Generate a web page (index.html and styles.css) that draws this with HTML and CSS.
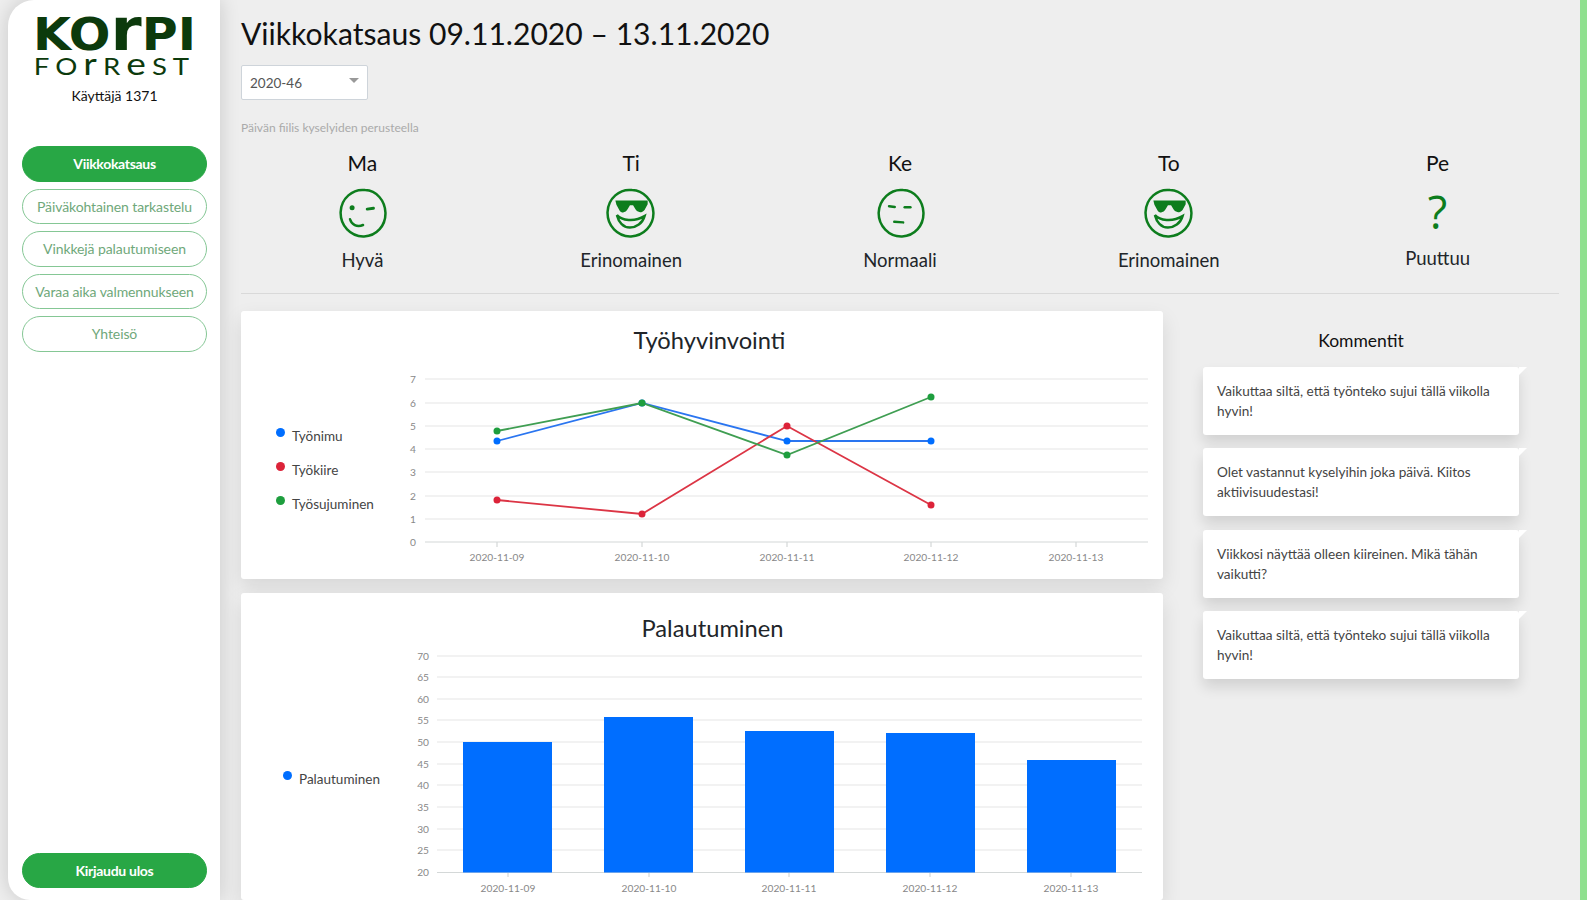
FILE: index.html
```html
<!DOCTYPE html>
<html lang="fi">

<head>
    <meta charset="UTF-8">
    <title>Viikkokatsaus</title>
    <link rel="stylesheet" href="styles.css">
</head>

<body>
    <div class="page">
        <aside class="sidebar">
            <div class="logo">
                <div class="logo-top">KO<span class="logo-r">r</span>PI</div>
                <div class="logo-bottom">FO<span class="logo-low">r</span>R<span class="logo-low">e</span>ST</div>
            </div>
            <div class="user">Käyttäjä 1371</div>
            <nav class="nav">
                <a class="pill active" href="#">Viikkokatsaus</a>
                <a class="pill" href="#">Päiväkohtainen tarkastelu</a>
                <a class="pill" href="#">Vinkkejä palautumiseen</a>
                <a class="pill" href="#">Varaa aika valmennukseen</a>
                <a class="pill" href="#">Yhteisö</a>
            </nav>
            <a class="pill active logout" href="#">Kirjaudu ulos</a>
        </aside>

        <main class="main">
            <h1>Viikkokatsaus 09.11.2020 – 13.11.2020</h1>
            <div class="week-select">2020-46<span class="caret"></span></div>
            <p class="caption">Päivän fiilis kyselyiden perusteella</p>

            <div class="days">
                <div class="day">
                    <div class="day-name">Ma</div>
                    <svg class="face" viewBox="0 0 48 48">
                        <path class="line" d="M27 2C15 0.500 4 10 3.500 23C3 36 13 47 26 46.500C38 46 47 36 46.500 23.500C46 12 38 2.500 27 2Z" />
                        <circle class="fill" cx="14.500" cy="19" r="2.400" />
                        <path class="line thick" d="M29 20.300L35 19.500" />
                        <path class="line" d="M12.500 30C14 35 19 38 25 35.500" />
                    </svg>
                    <div class="day-label">Hyvä</div>
                </div>
                <div class="day">
                    <div class="day-name">Ti</div>
                    <svg class="face" viewBox="0 0 48 48">
                        <path class="line" d="M25 2C13 0.500 2 10 1.500 23C1 36 11 47 24 46.500C36 46 46 36 45.500 23.500C45 12 36 2.500 25 2Z" />
                        <path class="fill" d="M9 12L40 12L40 15.500L37 21C34 24.500 30 23.500 28 20L26 16.500L23 16.500L21 20C19 24 15 24.500 13 21.500L10 16Z" />
                        <path class="line" d="M10.500 26C15 31 27 33 37 27C35 34 29 38 23 38C16 38 12 32 10.500 26Z" />
                    </svg>
                    <div class="day-label">Erinomainen</div>
                </div>
                <div class="day">
                    <div class="day-name">Ke</div>
                    <svg class="face" viewBox="0 0 48 48">
                        <path class="line" d="M27 2C15 0.500 4 11 3.500 24C3.500 36 13 47 26 46.500C38 46 47 36 46.500 23.500C46 12 38 2.500 27 2Z" />
                        <path class="line" d="M13.500 17.500L19 18.200" />
                        <path class="line" d="M28.500 18.500L34 18.500" />
                        <path class="line" d="M18.500 32.500L27 33" />
                    </svg>
                    <div class="day-label">Normaali</div>
                </div>
                <div class="day">
                    <div class="day-name">To</div>
                    <svg class="face" viewBox="0 0 48 48">
                        <path class="line" d="M25 2C13 0.500 2 10 1.500 23C1 36 11 47 24 46.500C36 46 46 36 45.500 23.500C45 12 36 2.500 25 2Z" />
                        <path class="fill" d="M9 12L40 12L40 15.500L37 21C34 24.500 30 23.500 28 20L26 16.500L23 16.500L21 20C19 24 15 24.500 13 21.500L10 16Z" />
                        <path class="line" d="M10.500 26C15 31 27 33 37 27C35 34 29 38 23 38C16 38 12 32 10.500 26Z" />
                    </svg>
                    <div class="day-label">Erinomainen</div>
                </div>
                <div class="day">
                    <div class="day-name">Pe</div>
                    <div class="missing">?</div>
                    <div class="day-label missing-label">Puuttuu</div>
                </div>
            </div>

            <hr class="divider">

            <div class="content">
                <div class="charts">
                    <section class="card">
                        <h2 class="chart-title">Työhyvinvointi</h2>
                        <div class="chart-body">
                            <ul class="legend">
                                <li><span class="dot blue"></span>Työnimu</li>
                                <li><span class="dot red"></span>Työkiire</li>
                                <li><span class="dot green"></span>Työsujuminen</li>
                            </ul>
                            <svg width="772" height="222" viewBox="391 357 772 222">
                                <g class="grid">
                                    <path d="M425 379H1148M425 403H1148M425 426H1148M425 449H1148M425 472H1148M425 496H1148M425 519H1148" />
                                    <path class="axis" d="M425 542H1148M497 542V547M642 542V547M787 542V547M931 542V547M1076 542V547" />
                                </g>
                                <g class="tick">
                                    <text x="416" y="383">7</text>
                                    <text x="416" y="407">6</text>
                                    <text x="416" y="430">5</text>
                                    <text x="416" y="453">4</text>
                                    <text x="416" y="476">3</text>
                                    <text x="416" y="500">2</text>
                                    <text x="416" y="523">1</text>
                                    <text x="416" y="546">0</text>
                                </g>
                                <g class="tick center">
                                    <text x="497" y="561">2020-11-09</text>
                                    <text x="642" y="561">2020-11-10</text>
                                    <text x="787" y="561">2020-11-11</text>
                                    <text x="931" y="561">2020-11-12</text>
                                    <text x="1076" y="561">2020-11-13</text>
                                </g>
                                <g class="series blue">
                                    <polyline points="497,441 642,403 787,441 931,441" />
                                    <circle cx="497" cy="441" r="3.500" /><circle cx="642" cy="403" r="3.500" /><circle cx="787" cy="441" r="3.500" /><circle cx="931" cy="441" r="3.500" />
                                </g>
                                <g class="series red">
                                    <polyline points="497,500 642,514 787,426 931,505" />
                                    <circle cx="497" cy="500" r="3.500" /><circle cx="642" cy="514" r="3.500" /><circle cx="787" cy="426" r="3.500" /><circle cx="931" cy="505" r="3.500" />
                                </g>
                                <g class="series green">
                                    <polyline points="497,431 642,403 787,455 931,397" />
                                    <circle cx="497" cy="431" r="3.500" /><circle cx="642" cy="403" r="3.500" /><circle cx="787" cy="455" r="3.500" /><circle cx="931" cy="397" r="3.500" />
                                </g>
                            </svg>
                        </div>
                    </section>

                    <section class="card card-bars">
                        <h2 class="chart-title">Palautuminen</h2>
                        <div class="chart-body">
                            <ul class="legend">
                                <li><span class="dot blue"></span>Palautuminen</li>
                            </ul>
                            <svg width="772" height="255" viewBox="391 645 772 255">
                                <g class="grid">
                                    <path d="M437 656H1142M437 677H1142M437 699H1142M437 720H1142M437 742H1142M437 764H1142M437 785H1142M437 807H1142M437 829H1142M437 850H1142" />
                                    <path class="axis" d="M437 872.500H1142M508 872V877M649 872V877M789 872V877M930 872V877M1071 872V877" />
                                </g>
                                <g class="tick">
                                    <text x="429" y="660">70</text>
                                    <text x="429" y="681">65</text>
                                    <text x="429" y="703">60</text>
                                    <text x="429" y="724">55</text>
                                    <text x="429" y="746">50</text>
                                    <text x="429" y="768">45</text>
                                    <text x="429" y="789">40</text>
                                    <text x="429" y="811">35</text>
                                    <text x="429" y="833">30</text>
                                    <text x="429" y="854">25</text>
                                    <text x="429" y="876">20</text>
                                </g>
                                <g class="bar">
                                    <rect x="463" y="742" width="89" height="130.500" />
                                    <rect x="604" y="717" width="89" height="155.500" />
                                    <rect x="745" y="731" width="89" height="141.500" />
                                    <rect x="886" y="733" width="89" height="139.500" />
                                    <rect x="1027" y="760" width="89" height="112.500" />
                                </g>
                                <g class="tick center">
                                    <text x="508" y="892">2020-11-09</text>
                                    <text x="649" y="892">2020-11-10</text>
                                    <text x="789" y="892">2020-11-11</text>
                                    <text x="930" y="892">2020-11-12</text>
                                    <text x="1071" y="892">2020-11-13</text>
                                </g>
                            </svg>
                        </div>
                    </section>
                </div>

                <aside class="comments">
                    <h3>Kommentit</h3>
                    <div class="comment">Vaikuttaa siltä, että työnteko sujui tällä viikolla hyvin!</div>
                    <div class="comment">Olet vastannut kyselyihin joka päivä. Kiitos aktiivisuudestasi!</div>
                    <div class="comment">Viikkosi näyttää olleen kiireinen. Mikä tähän vaikutti?</div>
                    <div class="comment">Vaikuttaa siltä, että työnteko sujui tällä viikolla hyvin!</div>
                </aside>
            </div>
        </main>
        <div class="edge"></div>
    </div>
</body>

</html>
```

FILE: styles.css
```css
* {
    box-sizing: border-box;
}

body {
    margin: 0;
    overflow: hidden;
    background-color: #eeeeee;
    font-family: Lato, "Open Sans", sans-serif;
    color: #212529;
}

.page {
    display: flex;
    height: 900px;
    padding-left: 8px;
}

/* sidebar */
.sidebar {
    display: flex;
    flex-direction: column;
    flex: 0 0 212px;
    height: 900px;
    padding: 0 13px 12px 14px;
    background: #fff;
    border-radius: 26px 0 0 22px;
    box-shadow: 0 0 20px rgba(0, 0, 0, 0.16);
}

.logo {
    height: 80px;
    padding-top: 8px;
    text-align: center;
    color: #0c3a0c;
    white-space: nowrap;
}

.logo-top {
    height: 44px;
    font-family: "DejaVu Sans", sans-serif;
    font-size: 45px;
    line-height: 44px;
    font-weight: bold;
    transform: scaleX(1.09);
}

.logo-r {
    font-size: 58px;
}

.logo-bottom {
    height: 20px;
    margin-top: 1px;
    font-family: Lato, sans-serif;
    font-size: 23px;
    line-height: 20px;
    font-weight: 400;
    letter-spacing: 5px;
    transform: scaleX(1.2);
}

.logo-low {
    font-size: 31px;
}

.user {
    margin-top: 7px;
    text-align: center;
    font-size: 14px;
    line-height: 18px;
    color: #111;
}

.nav {
    display: flex;
    flex-direction: column;
    gap: 7px;
    margin-top: 41px;
}

.pill {
    display: block;
    height: 35.500px;
    line-height: 33px;
    text-align: center;
    font-size: 14px;
    letter-spacing: -0.1px;
    text-decoration: none;
    white-space: nowrap;
    color: #6fa87a;
    background: #fff;
    border: 1px solid #85c795;
    border-radius: 18px;
}

.pill.active {
    color: #fff;
    font-weight: bold;
    letter-spacing: -0.3px;
    background: #28a745;
    border-color: #28a745;
}

.logout {
    margin-top: auto;
}

/* main */
.main {
    flex: 0 0 1318px;
    margin-left: 21px;
}

h1 {
    margin: 0;
    padding-top: 14px;
    font-size: 30.100px;
    line-height: 38px;
    font-weight: 400;
    color: #111;
}

.week-select {
    display: flex;
    justify-content: space-between;
    align-items: flex-start;
    width: 127px;
    height: 35px;
    margin-top: 12.500px;
    padding: 0 8px 0 8px;
    font-size: 13.500px;
    line-height: 34px;
    color: #555;
    background: #fff;
    border: 1px solid #ced4da;
    border-radius: 2px;
}

.caret {
    margin-top: 12px;
    border-left: 5px solid transparent;
    border-right: 5px solid transparent;
    border-top: 5px solid #999;
}

.caption {
    margin: 21px 0 0;
    font-size: 12px;
    line-height: 14px;
    color: #aaa;
}

.days {
    display: grid;
    grid-template-columns: repeat(5, 1fr);
    margin: 16px -13px 0;
    text-align: center;
}

.day-name {
    font-size: 21px;
    line-height: 24px;
    color: #111;
}

.face {
    display: block;
    width: 50px;
    height: 50px;
    margin: 13px auto 0;
}

.face .line {
    fill: none;
    stroke: #0d7d1d;
    stroke-width: 2.400;
    stroke-linecap: round;
}

.face .thick {
    stroke-width: 2.800;
}

.face .fill {
    fill: #0d7d1d;
}

.day-label {
    margin-top: 11px;
    font-size: 18.500px;
    line-height: 22px;
    color: #212529;
}

.missing {
    height: 48px;
    margin-top: 13.500px;
    font-family: "Open Sans", sans-serif;
    font-size: 45px;
    line-height: 48px;
    color: #0d7d1d;
}

.missing-label {
    margin-top: 10.500px;
}

.divider {
    height: 1px;
    margin: 22px 0 0;
    background: #d9d9d9;
    border: 0;
}

.content {
    display: flex;
    margin-top: 17px;
}

.charts {
    flex: 0 0 922px;
}

.card {
    height: 268px;
    margin-bottom: 14px;
    background: #fff;
    border-radius: 3px;
    box-shadow: 0 8px 20px rgba(0, 0, 0, 0.1);
}

.card-bars {
    height: 307px;
    margin-bottom: 0;
}

.chart-title {
    height: 46px;
    margin: 0;
    padding: 13px 0 0 15px;
    text-align: center;
    font-size: 23.700px;
    line-height: 32px;
    font-weight: 400;
    color: #212529;
}

.card-bars .chart-title {
    height: 52px;
    padding: 19px 0 0 21px;
}

.chart-body {
    display: flex;
}

.chart-body svg {
    display: block;
}

.legend {
    flex: 0 0 150px;
    margin: 0;
    padding: 62px 0 0 35px;
    list-style: none;
    font-size: 13.500px;
    color: #444;
}

.card-bars .legend {
    padding: 117px 0 0 42px;
}

.legend li {
    position: relative;
    height: 34px;
    padding-left: 16px;
    line-height: 34px;
    white-space: nowrap;
}

.dot {
    position: absolute;
    top: 9.500px;
    left: 0;
    width: 9px;
    height: 9px;
    border-radius: 50%;
}

.dot.blue {
    background: #006eff;
}

.dot.red {
    background: #dc2339;
}

.dot.green {
    background: #1e9e3e;
}

.grid path {
    fill: none;
    stroke: #e6e6e6;
    stroke-width: 1.200;
}

.grid .axis {
    stroke: #d4d8d8;
}

.tick text {
    font-size: 10.200px;
    fill: #888;
    text-anchor: end;
}

.tick.center text {
    text-anchor: middle;
}

.series polyline {
    fill: none;
    stroke-width: 1.800;
}

.series.blue polyline {
    stroke: #2a75f0;
}

.series.blue circle {
    fill: #006eff;
}

.series.red polyline {
    stroke: #dc3545;
}

.series.red circle {
    fill: #dc2339;
}

.series.green polyline {
    stroke: #3f9e52;
}

.series.green circle {
    fill: #1e9e3e;
}

.bar rect {
    fill: #006eff;
}

/* comments */
.comments {
    flex: 0 0 316px;
    margin-left: 40px;
}

.comments h3 {
    margin: 19px 0 0;
    text-align: center;
    font-size: 17.500px;
    line-height: 22px;
    font-weight: 400;
    color: #111;
}

.comment {
    position: relative;
    width: 316px;
    height: 68px;
    margin-bottom: 13.500px;
    padding: 14px 14px 0;
    font-size: 13.600px;
    line-height: 20.200px;
    color: #444;
    background: #fff;
    border-radius: 3px;
    box-shadow: 0 8px 14px rgba(0, 0, 0, 0.12);
}

.comments h3 + .comment {
    margin-top: 15px;
}

.comment::after {
    content: "";
    position: absolute;
    top: 0;
    right: -8px;
    border-top: 8px solid #fff;
    border-right: 8px solid transparent;
}

.edge {
    flex: 0 0 7px;
    height: 900px;
    margin-left: auto;
    background: #8fe08f;
}
```
